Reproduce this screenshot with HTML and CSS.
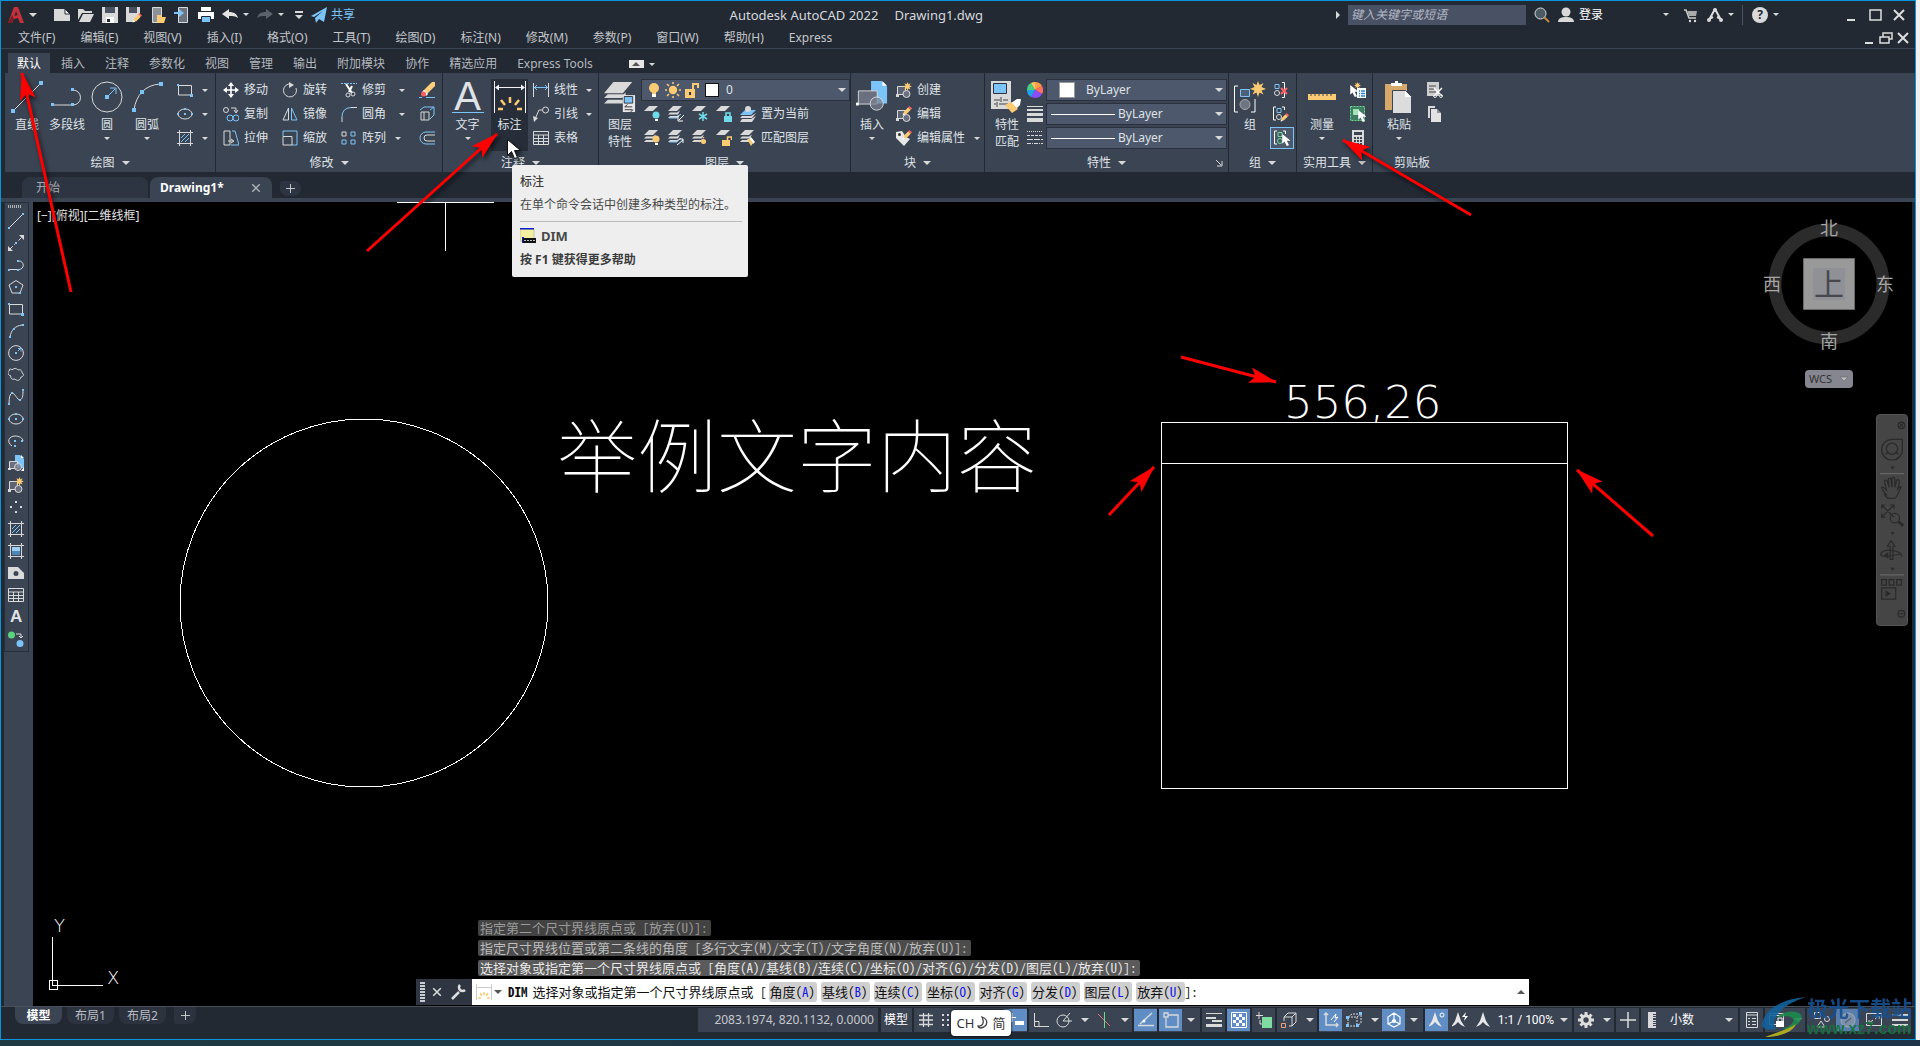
FILE: index.html
```html
<!DOCTYPE html>
<html lang="zh-CN">
<head>
<meta charset="utf-8">
<title>Autodesk AutoCAD 2022 Drawing1.dwg</title>
<link rel="stylesheet" href="styles.css">
</head>
<body>
<svg class="defs" aria-hidden="true">
  <defs>
    <symbol id="line" viewBox="0 0 32 32"><path class="w" d="M3 29 29 3"/><path class="bf" d="M0 28h4v4H0zM28 0h4v4h-4z"/></symbol>
    <symbol id="pline" viewBox="0 0 32 32"><path class="w" d="M2 24H22M22 9a7.500 7.500 0 0 1 0 15"/><path class="bf" d="M0 22h3v3H0zM20 22h3v3h-3zM20 7h3v3h-3z"/></symbol>
    <symbol id="circle" viewBox="0 0 32 32"><circle class="w" cx="16" cy="16" r="15"/><path class="b" d="M16 16 24 8M19 7h6v6"/><path class="bf" d="M14 14h4v4h-4z"/></symbol>
    <symbol id="arc" viewBox="0 0 32 32"><path class="w" d="M3 29C5 14 14 4 29 3"/><path class="bf" d="M1 27h4v4H1zM9 9h4v4H9zM28 1h4v4h-4z"/></symbol>
    <symbol id="line16" viewBox="0 0 16 16"><path class="w" d="M2 14 14 2"/><path class="bf" d="M0 14h2v2H0zM14 0h2v2h-2z"/></symbol>
    <symbol id="pline16" viewBox="0 0 16 16"><path class="w" d="M2 12.500h8M11 4a4 4 0 0 1 0 8.500"/><path class="bf" d="M0 12h2v2H0zM9 12h2v2H9zM9 3h2v2H9z"/></symbol>
    <symbol id="circle16" viewBox="0 0 16 16"><circle class="w" cx="8" cy="8" r="7.400"/><path class="b" d="M10 6l3-3M10 3.500h3v3"/><path class="bf" d="M7 7h2v2H7z"/></symbol>
    <symbol id="arc16" viewBox="0 0 16 16"><path class="w" d="M2 14C3 7 7 3 14 2"/><path class="bf" d="M1 13h2v2H1zM5 5h2v2H5zM14 1h2v2h-2z"/></symbol>
    <symbol id="rect" viewBox="0 0 16 16"><path class="w" d="M2 3.500H14.500V13H1.500V4"/><path class="bf" d="M0 2h2v2H0zM13 12h3v3h-3z"/></symbol>
    <symbol id="ellipse" viewBox="0 0 16 16"><ellipse class="w" cx="8" cy="8" rx="7" ry="5"/><path class="bf" d="M7 2h2v2H7zM0 7h2v2H0zM14 7h2v2h-2zM7 7h2v2H7z"/></symbol>
    <symbol id="hatch" viewBox="0 0 16 16"><path class="w" d="M0 2.500h16M0 13.500h16M2.500 0v16M13.500 0v16"/><path class="b" d="M4 8 8 4M4 12 12 4M8 12 12 8"/></symbol>
    <symbol id="grad" viewBox="0 0 16 16"><path fill="#4f86b8" d="M4 4h8v8H4z"/><path fill="#9ccdf5" d="M4 4h8v4H4z"/><path class="w" d="M0 2.500h16M0 13.500h16M2.500 0v16M13.500 0v16"/></symbol>
    <symbol id="move" viewBox="0 0 16 16"><path stroke="#fff" stroke-width="1.600" fill="none" d="M8 1v14M1 8h14"/><path fill="#fff" d="M8 0l3 4H5zM8 16l3-4H5zM0 8l4-3v6zM16 8l-4-3v6z"/></symbol>
    <symbol id="rotate" viewBox="0 0 16 16"><path class="w" d="M9 2a6.500 6.500 0 1 0 5 4"/><path class="wf" d="M7 0l5 3-5 3z"/></symbol>
    <symbol id="trim" viewBox="0 0 16 16"><path class="b" stroke-dasharray="2 1" d="M0 1.500h16"/><path stroke="#fff" stroke-width="2" fill="none" d="M5 2l6 9M11 4l-3 6"/><circle class="w" cx="7" cy="13" r="2"/><circle class="w" cx="12" cy="12" r="2"/></symbol>
    <symbol id="copyo" viewBox="0 0 16 16"><circle class="w" cx="3" cy="4" r="2.500"/><circle class="b" cx="7" cy="12" r="3"/><circle class="b" cx="13" cy="12" r="3"/><path class="w" d="M8 2h5v4M11 4l2 3 2-3"/></symbol>
    <symbol id="mirror" viewBox="0 0 16 16"><path class="w" d="M6.500 2v12H1z"/><path class="b" d="M9.500 2v12H15z"/></symbol>
    <symbol id="fillet" viewBox="0 0 16 16"><path class="b" d="M1 11Q1 2 10 1.500"/><path class="w" d="M1 11v5M10 1.500h6"/></symbol>
    <symbol id="stretch" viewBox="0 0 16 16"><path class="w" d="M1 1h6v14H1zM5 11h5M8 9l3 2-3 2"/><path class="b" d="M9 1h3l4 14H8"/></symbol>
    <symbol id="scale" viewBox="0 0 16 16"><path class="b" d="M1 6V1h14v14H10"/><path class="w" d="M1 6.500h9V15H1z"/></symbol>
    <symbol id="array" viewBox="0 0 16 16"><path class="w" d="M1 2h4v4H1z"/><path class="b" d="M10 2h4v4h-4zM1 10h4v4H1zM10 10h4v4h-4z"/></symbol>
    <symbol id="erase" viewBox="0 0 16 16"><path fill="#ffd07c" d="M4 9 13 0h3v4L8 12z"/><path fill="#fff" d="M5 8l4 4-2 2-4-4z"/><circle cx="4.500" cy="12" r="2.500" fill="#ff5f5f"/><path class="b" d="M0 15.500h3M7 15.500h9"/></symbol>
    <symbol id="explode" viewBox="0 0 16 16"><path class="b" d="M1 4 5 1h10v8l-4 4M11 4l4-3"/><path class="w" d="M2 6h8v8H2zM5 6v8"/></symbol>
    <symbol id="offset" viewBox="0 0 16 16"><path class="b" d="M16 2H7a6 6 0 0 0 0 12h9"/><path class="w" d="M16 5H8a3 3 0 0 0 0 6h8"/></symbol>
    <symbol id="dim" viewBox="0 0 32 32"><path stroke="#f2f2f2" fill="none" d="M.5 0v32M31.500 0v32M2 6.500h28"/><path fill="#f2f2f2" d="M1 6.500l4-3v6zM31 6.500l-4-3v6z"/><path stroke="#fbcb74" stroke-width="2.500" fill="none" d="M4 28h5M23 28h5M7 19l4 5M25 19l-4 5M16 16v6"/></symbol>
    <symbol id="linear" viewBox="0 0 16 16"><path class="w" d="M.5 1v14M15.500 1v14"/><path class="b" d="M1 5.500h14M4 3 1.500 5.500 4 8M12 3l2.500 2.500L12 8"/></symbol>
    <symbol id="leader" viewBox="0 0 16 16"><circle class="w" cx="12.500" cy="4" r="3"/><path class="w" d="M9 4H6L2 13"/><path class="wf" d="M0 10l5 2-4 4z"/></symbol>
    <symbol id="table" viewBox="0 0 16 16"><path class="w" d="M.5 1.500h15v13H.5zM.5 5h15M.5 8.500h15M.5 11.500h15M5.500 5v9.500M10.500 5v9.500"/></symbol>
    <symbol id="layers" viewBox="0 0 34 34"><path class="wf" d="M10 1h20l-10 12H0zM4 14h17l2-2v5l-5 1H0zM4 20h16v4H0z"/><path fill="#e8e8e8" d="M20 15h13v18H20z"/><path fill="#7cc4f8" stroke="#2c3440" d="M21.500 16.500h9v7h-9z"/><path stroke="#333" fill="none" d="M22 27.500h8M25 25l-3 2.500M22 30.500h8M28 33l3-2.500"/></symbol>
    <symbol id="lyr" viewBox="0 0 16 16"><path class="wf" d="M5 0h9l-5 5H0z"/></symbol>
    <symbol id="lyr3" viewBox="0 0 16 16"><path class="wf" d="M5 0h9l-5 5H0zM2 6.500h7l3-2-2 4H0zM2 10h7l3-2-3 4H0z"/></symbol>
    <symbol id="lOff" viewBox="0 0 16 16"><use href="#lyr"/><circle cx="12" cy="9" r="3.500" fill="#70dbe8"/><path fill="#fff" d="M11 13h3v2h-3z"/></symbol>
    <symbol id="lIso" viewBox="0 0 16 16"><use href="#lyr3"/><path class="b" d="M1 12h8l4-4"/><path stroke="#fff" fill="none" d="M16 9l-5 5M10 10v5h5"/></symbol>
    <symbol id="lFrz" viewBox="0 0 16 16"><use href="#lyr"/><path stroke="#70dbe8" stroke-width="1.500" fill="none" d="M11 6v9M7 8l8 5M15 8l-8 5"/></symbol>
    <symbol id="lLck" viewBox="0 0 16 16"><use href="#lyr"/><path fill="#70dbe8" d="M8 10h8v6H8z"/><path stroke="#70dbe8" fill="none" stroke-width="1.500" d="M10 10V7h4v3"/></symbol>
    <symbol id="lOn" viewBox="0 0 16 16"><use href="#lyr3"/><circle cx="12" cy="9" r="3.500" fill="#fbcb74"/><path fill="#fff" d="M11 13h3v2h-3z"/></symbol>
    <symbol id="lUniso" viewBox="0 0 16 16"><use href="#lyr3"/><path class="b" d="M1 12h8l4-4"/><path stroke="#fff" fill="none" d="M9 15l6-5M11 9h4v4"/></symbol>
    <symbol id="lThw" viewBox="0 0 16 16"><use href="#lyr3"/><circle cx="11.500" cy="11.500" r="2.500" fill="#fbcb74"/><path stroke="#fbcb74" stroke-dasharray="1 2" fill="none" stroke-width="1.500" d="M11.500 7v9M7 11.500h9"/></symbol>
    <symbol id="lUnl" viewBox="0 0 16 16"><use href="#lyr"/><path fill="#fbcb74" d="M6 10h8v6H6z"/><path stroke="#fbcb74" fill="none" stroke-width="1.500" d="M11.500 10V7h4v3"/></symbol>
    <symbol id="lCur" viewBox="0 0 16 16"><path class="bf" d="M5 4h11l-5 5H0z"/><path class="wf" d="M2 10h9l5-3-4 5H0zM2 13h9l5-3-4 6H0z"/><circle class="wf" cx="8" cy="3" r="3"/></symbol>
    <symbol id="lMat" viewBox="0 0 16 16"><use href="#lyr3"/><path fill="#fff" d="M9 9l2-2 4 5-2 2z"/><path fill="#fbcb74" d="M7 9l3 0 3 4-2 3z"/></symbol>
    <symbol id="bulb" viewBox="0 0 16 16"><circle cx="8" cy="6" r="5" fill="#fbcb74"/><path fill="#fbcb74" d="M6 9h4v3H6z"/><path fill="#fff" d="M6 12h4v3H6z"/></symbol>
    <symbol id="sun" viewBox="0 0 16 16"><circle cx="8" cy="8" r="4.200" fill="#fbcb74"/><path stroke="#fbcb74" stroke-width="1.500" d="M8 0v2M8 14v2M0 8h2M14 8h2M2 2l2 2M14 2l-2 2M2 14l2-2M14 14l-2-2"/></symbol>
    <symbol id="unlock" viewBox="0 0 16 16"><path fill="#fbcb74" d="M1 7h10v9H1z"/><path stroke="#fbcb74" fill="none" stroke-width="2" d="M9 7V2h5v4"/><path fill="#333" d="M5 10h2v3H5z"/></symbol>
    <symbol id="insert" viewBox="0 0 34 34"><path class="bf" d="M16 0h11l6 6v18H16z"/><path fill="#fff" d="M28 0l5 5h-5z"/><path fill="#6b7080" stroke="#d9d9d9" d="M2.500 10.500h20v14h-20z"/><circle fill="#7a8090" fill-opacity=".7" stroke="#d9d9d9" cx="22" cy="24" r="7"/><path fill="#fff" d="M0 23h3v3H0z"/></symbol>
    <symbol id="insert16" viewBox="0 0 16 16"><path class="bf" d="M7 0h5l4 4v9H7z"/><path fill="#fff" d="M13 0l3 3h-3zM16 12v4h-3z"/><path fill="#6b7080" stroke="#d9d9d9" d="M1.500 6.500h8v7h-8z"/><circle fill="#7a8090" fill-opacity=".8" stroke="#d9d9d9" cx="10" cy="12" r="3.500"/><path class="wf" d="M0 13h3v2H0z"/></symbol>
    <symbol id="blk" viewBox="0 0 16 16"><path fill="#5d6574" stroke="#d9d9d9" d="M1.500 4.500h8v8h-8z"/><circle fill="#6b7080" stroke="#d9d9d9" cx="10.500" cy="12" r="3.500"/><path class="wf" d="M0 12h3v3H0z"/></symbol>
    <symbol id="star" viewBox="0 0 16 16"><path fill="#fbcb74" d="M8 0l1.500 4 4-2-2 4 4.500 2-4.500 1.500 2 4-4-2L8 16l-1.500-4.500-4 2 2-4L0 8l4.500-2-2-4 4 2z"/></symbol>
    <symbol id="pen" viewBox="0 0 16 16"><path fill="#fbcb74" d="M2 14l1-5 7-7 4 4-7 7z"/><path fill="#ff5f5f" d="M10 2l2-2 4 4-2 2z"/><path fill="#fff" d="M1 15l1-4 3 3z"/></symbol>
    <symbol id="create" viewBox="0 0 16 16"><use href="#blk"/><use href="#star" x="7" y="0" width="9" height="9"/></symbol>
    <symbol id="bedit" viewBox="0 0 16 16"><use href="#blk"/><use href="#pen" x="6" y="0" width="10" height="10"/></symbol>
    <symbol id="attr" viewBox="0 0 16 16"><path fill="#e8e8e8" d="M0 2l6-1 4 6 4 2-6 7-8-8z"/><circle cx="3.500" cy="4.500" r="1.500" fill="#333"/><use href="#pen" x="6" y="0" width="10" height="10"/></symbol>
    <symbol id="match" viewBox="0 0 32 32"><path class="wf" d="M0 0h20v28H0z"/><path fill="#7cc4f8" stroke="#2c3440" d="M2.500 2.500h13v10h-13z"/><path stroke="#444" fill="none" d="M3 19h6M12 19h5M3 23h2M8 23h9M10 16v5M6 21v5"/><path fill="#fff" d="M20 22l6-4 4 0-1 6-4 4z"/><path fill="#fbcb74" d="M14 24l6-3 7 7-6 4z"/></symbol>
    <symbol id="wheel" viewBox="0 0 16 16"><path fill="#ff9b4a" d="M8 8V0a8 8 0 0 1 7 4z"/><path fill="#ff6f61" d="M8 8l7-4a8 8 0 0 1 0 8z"/><path fill="#8a4dff" d="M8 8l7 4a8 8 0 0 1-7 4l-4-1z"/><path fill="#23a3e8" d="M8 8l-4 7a8 8 0 0 1-4-7z"/><path fill="#45cf82" d="M8 8H0a8 8 0 0 1 4-7z"/><path fill="#fbcb5a" d="M8 8 4 1a8 8 0 0 1 4-1z"/></symbol>
    <symbol id="lw" viewBox="0 0 16 16"><path class="wf" d="M0 0h16v1H0zM0 3h16v2H0zM0 7h16v3H0zM0 12h16v4H0z"/></symbol>
    <symbol id="lt" viewBox="0 0 16 16"><path class="w" stroke-dasharray="1 1" d="M0 1.500h16"/><path class="w" stroke-dasharray="3 1" d="M0 5.500h16"/><path class="w" stroke-dasharray="6 1" d="M0 9.500h16"/><path class="w" stroke-dasharray="4 1 1 1" d="M0 13.500h16"/></symbol>
    <symbol id="group" viewBox="0 0 32 32"><path stroke="#fff" fill="none" d="M4 5H.5v26H4M17 31h4V18"/><path fill="#4d6076" stroke="#7cc4f8" d="M6.500 8.500h9v7h-9z"/><circle fill="#6f7581" stroke="#aaa" cx="11" cy="23.500" r="5"/><use href="#star" x="16" y="0" width="16" height="16"/></symbol>
    <symbol id="grp" viewBox="0 0 16 16"><path stroke="#fff" fill="none" d="M3 1H.5v13H3M9 1h2.500v3"/><path class="b" d="M4 2.500h4v4H4z"/><circle class="w" cx="6" cy="11" r="2.500"/></symbol>
    <symbol id="ungrp" viewBox="0 0 16 16"><path class="b" d="M2 2.500h4v4H2z"/><circle class="w" cx="4" cy="11" r="2.500"/><path stroke="#fff" fill="none" d="M9 .5h2.500v15H9"/><path stroke="#ff6464" stroke-width="2" d="M8 6l6 6M14 6l-6 6"/></symbol>
    <symbol id="gedit" viewBox="0 0 16 16"><use href="#grp"/><use href="#pen" x="7" y="7" width="9" height="9"/></symbol>
    <symbol id="cursor" viewBox="0 0 16 16"><path fill="#fff" d="M3 0v13l3-3 3 6 3-1-3-6h5z"/></symbol>
    <symbol id="gsel" viewBox="0 0 16 16"><path stroke="#fff" fill="none" d="M3 1H.5v13H3M9 1h2.500v3"/><path stroke="#6bdc8c" fill="none" d="M4 2.500h4v4H4z"/><circle stroke="#6bdc8c" fill="none" cx="6" cy="11" r="2.500"/><use href="#cursor" x="6" y="4" width="12" height="12"/></symbol>
    <symbol id="ruler" viewBox="0 0 32 32"><path fill="#fbcb74" d="M2 13h28v6H2z"/><path stroke="#3b4453" d="M5 12v3M9 12v3M13 12v3M17 12v3M21 12v3M25 12v3"/></symbol>
    <symbol id="qsel" viewBox="0 0 16 16"><use href="#star" x="4" y="0" width="7" height="7"/><use href="#cursor" x="-2" y="3" width="12" height="12"/><path fill="#fff" d="M7 6h9v10H7z"/><path stroke="#2484d8" stroke-width="1.400" d="M9 9h1M11 9h4M9 11.500h1M11 11.500h4M9 14h1M11 14h4"/></symbol>
    <symbol id="ssel" viewBox="0 0 16 16"><path stroke="#6bdc8c" fill="#3f7c63" stroke-dasharray="2 1" d="M.5.5h14v14H.5z"/><path fill="#a0e4b6" d="M3 3h6v6H3z"/><use href="#cursor" x="6" y="4" width="12" height="12"/></symbol>
    <symbol id="calc" viewBox="0 0 16 16"><path class="wf" d="M2 0h12v16H2z"/><path fill="#3b4453" d="M4 2h8v3H4zM4 7h2v2H4zM7 7h2v2H7zM10 7h2v2h-2zM4 10h2v2H4zM7 10h2v2H7zM10 10h2v2h-2zM4 13h2v2H4zM7 13h2v2H7zM10 13h2v2h-2z"/></symbol>
    <symbol id="paste" viewBox="0 0 32 32"><path fill="#d7a96b" d="M2 3h22v26H2z"/><path fill="#fff" d="M8 2h4V0h3v2h4v3H8z"/><path fill="#dcdcdc" stroke="#3b4453" d="M9.500 9.500h13l6 6v17h-19z"/><path fill="#fff" d="M22 10v6h6z"/></symbol>
    <symbol id="cut" viewBox="0 0 16 16"><path fill="#cfcfcf" d="M0 0h12v14H0z"/><path stroke="#444" d="M2 4h7M2 7h5M2 10h7"/><path stroke="#fff" stroke-width="1.500" d="M7 6l8 8M15 6l-8 8"/><circle class="w" cx="8" cy="14" r="1.500"/><circle class="w" cx="14" cy="14" r="1.500"/></symbol>
    <symbol id="copy" viewBox="0 0 16 16"><path class="wf" d="M1 0h7v2H3v10H1z"/><path fill="#e2e2e2" d="M4 3h6l4 4v9H4z"/><path fill="#3b4453" d="M10 3v4h4z" opacity=".5"/></symbol>
    <symbol id="xline" viewBox="0 0 16 16"><path class="w" stroke-dasharray="4 2" d="M2 14 14 2"/><path class="wf" d="M0 16v-5l5 5zM16 0h-5l5 5z"/><path class="bf" d="M7 7h2v2H7z"/></symbol>
    <symbol id="poly" viewBox="0 0 16 16"><path class="w" d="M8 1.500 15 6l-3 8H4L1 6z"/><path class="bf" d="M7 7h2v2H7zM11 13h2v2h-2z"/></symbol>
    <symbol id="cloud" viewBox="0 0 16 16"><path class="w" d="M4 3c3-3 5-1 6 0 3-1 4 1 4 3 3 1 1 4-1 4-1 4-4 4-6 2-3 1-5-1-4-3-4-1-4-5-1-6-1-1 0-2 2 0z"/></symbol>
    <symbol id="spline" viewBox="0 0 16 16"><path class="w" d="M1 15Q1 5 4 4c3 0 5 7 8 7 3-1 3-6 3-10"/><path class="bf" d="M0 14h2v2H0zM3 3h2v2H3zM11 10h2v2h-2zM14 0h2v2h-2z"/></symbol>
    <symbol id="earc" viewBox="0 0 16 16"><path class="w" d="M4 13C-2 9 1 3 7 3c4 0 8 2 8 5"/><path class="bf" d="M6 7h2v2H6zM13 7h2v2h-2zM6 12h2v2H6z"/></symbol>
    <symbol id="points" viewBox="0 0 16 16"><path class="wf" d="M7 2h2v2H7zM2 7h2v2H2zM12 7h2v2h-2zM7 12h2v2H7z"/></symbol>
    <symbol id="region" viewBox="0 0 16 16"><path fill="#d9d9d9" fill-rule="evenodd" d="M0 2h10l6 6v6H0zM8 6a2.500 2.500 0 1 0 0 5 2.500 2.500 0 0 0 0-5z"/></symbol>
    <symbol id="dots2" viewBox="0 0 16 16"><circle cx="3.500" cy="4" r="3.500" fill="#58d47e"/><circle cx="12" cy="12.500" r="3.500" fill="#7cc4f8"/><path class="w" d="M8 3h5v4M11 5l2 2 2-2"/></symbol>
    <symbol id="fNew" viewBox="0 0 16 16"><path class="wf" d="M0 2h11l5 5v7H0z"/><path fill="#fff" stroke="#222933" d="M11 2v5h5z"/></symbol>
    <symbol id="fOpen" viewBox="0 0 16 16"><path class="wf" d="M0 2h5l2 2h7v2H4l-4 7z"/><path class="wf" d="M5 7h11l-4 8H1z"/></symbol>
    <symbol id="fSave" viewBox="0 0 16 16"><path class="wf" d="M0 0h16v16H0z"/><path fill="#4a5160" d="M3 0h10v6H3z"/><path fill="#fff" d="M4 10h8v6H4z"/><path fill="#222933" d="M5 12h3v3H5z"/></symbol>
    <symbol id="fSaveAs" viewBox="0 0 16 16"><path class="wf" d="M0 0h14v9l-6 6H0z"/><path fill="#4a5160" d="M3 0h8v6H3z"/><use href="#pen" x="6" y="6" width="10" height="10"/></symbol>
    <symbol id="fMob" viewBox="0 0 16 16"><path fill="#8c919a" stroke="#d9d9d9" d="M2.500.5h9v15h-9z"/><path fill="#fbcb74" d="M7 8h4l1 2h4l-2 6H7z"/></symbol>
    <symbol id="fMobS" viewBox="0 0 16 16"><path fill="#6e747f" stroke="#d9d9d9" d="M4.500.5h9v15h-9z"/><path fill="#7cc4f8" d="M0 5h5V2l5 4-5 4V7H0z"/></symbol>
    <symbol id="print" viewBox="0 0 16 16"><path fill="#fff" d="M3 0h10v4H3zM0 5h16v7H0z"/><path fill="#7cc4f8" stroke="#222933" d="M3.500 9.500h9v6h-9z"/></symbol>
    <symbol id="undo" viewBox="0 0 16 16"><path fill="#e4e4e4" d="M0 7l7-5v3c5 0 8 2 9 6-3-2-5-2-9-2v3z"/></symbol>
    <symbol id="redo" viewBox="0 0 16 16"><path fill="#5c626c" d="M16 7 9 2v3C4 5 1 7 0 11c3-2 5-2 9-2v3z"/></symbol>
    <symbol id="plane" viewBox="0 0 16 16"><path fill="#7cc4f8" d="M0 9 16 0l-3 15-5-3-3 4-1-5 8-7-9 6z"/></symbol>
    <symbol id="logoA" viewBox="0 0 16 16"><path fill="#c5303a" d="M6 0h4l6 16h-4l-2-5-4 1-2 4H0zM8 4 6.500 9 9.500 8z"/><path fill="#7d1c25" d="M0 16 4 8l2 4-2 4z"/></symbol>
    <symbol id="search" viewBox="0 0 16 16"><circle fill="#4b5a63" stroke="#ddd" cx="6.500" cy="6.500" r="5.500"/><path stroke="#c48a4b" stroke-width="2" d="M10.500 10.500 15 15"/></symbol>
    <symbol id="user" viewBox="0 0 16 16"><circle class="wf" cx="8" cy="5" r="4.500"/><path class="wf" d="M0 15c0-4 4-5 8-5s8 1 8 5z"/></symbol>
    <symbol id="cart" viewBox="0 0 16 16"><path stroke="#ccc" fill="none" stroke-width="1.500" d="M1 3h2l3 8h7"/><path fill="#aaa" d="M4 4h10l-1 5H6z"/><circle class="wf" cx="7" cy="14" r="1.200"/><circle class="wf" cx="12" cy="14" r="1.200"/></symbol>
    <symbol id="adsk" viewBox="0 0 16 16"><path stroke="#ddd" stroke-width="2" fill="none" d="M8 2 2 13M8 2l6 11M2 12l4-2M14 12l-4-2"/><circle class="wf" cx="8" cy="3" r="2"/><circle class="wf" cx="2" cy="13" r="2"/><circle class="wf" cx="14" cy="13" r="2"/></symbol>
    <symbol id="min" viewBox="0 0 16 16"><path fill="#ddd" d="M4 12h8v2H4z"/></symbol>
    <symbol id="max" viewBox="0 0 16 16"><path stroke="#ddd" stroke-width="1.500" fill="none" d="M3 3h11v10H3z"/></symbol>
    <symbol id="restore" viewBox="0 0 16 16"><path stroke="#ddd" stroke-width="1.500" fill="none" d="M2 7h9v6H2zM5 7V3h9v6h-3"/></symbol>
    <symbol id="close" viewBox="0 0 16 16"><path stroke="#ddd" stroke-width="2" d="M3 3l10 10M13 3 3 13"/></symbol>
    <symbol id="wrench" viewBox="0 0 16 16"><path stroke="#ddd" stroke-width="2.500" fill="none" d="M2 15 9 8"/><path stroke="#ddd" stroke-width="2.500" fill="none" d="M10 1a3.500 3.500 0 1 0 5 5"/></symbol>
    <symbol id="sGrid" viewBox="0 0 16 16"><path class="w" stroke-width="1.300" d="M5.500 1v14M10.500 1v14M1 3.500h14M1 8h14M1 12.500h14"/></symbol>
    <symbol id="sSnap" viewBox="0 0 16 16"><path class="wf" d="M1 2h2v2H1zM6 2h2v2H6zM11 2h2v2h-2zM1 7h2v2H1zM6 7h2v2H6zM11 7h2v2h-2zM1 12h2v2H1zM6 12h2v2H6z"/></symbol>
    <symbol id="sDyn" viewBox="0 0 16 16"><path fill="#fff" d="M7 9h9v4H7z"/><path stroke="#fff" d="M4 1v9M0 5.500h8"/></symbol>
    <symbol id="sOrtho" viewBox="0 0 16 16"><path class="w" d="M1.500 1v13.500H16M1 9.500h5v5"/></symbol>
    <symbol id="sPolar" viewBox="0 0 16 16"><circle class="w" cx="7" cy="9" r="6"/><path class="w" d="M7 9h9M7 9l7-8"/></symbol>
    <symbol id="sIso" viewBox="0 0 16 16"><path stroke="#e57373" d="M2 2l12 12"/><path stroke="#6bdc8c" d="M8.500 0v16"/></symbol>
    <symbol id="sTrack" viewBox="0 0 16 16"><path class="w" stroke-width="1.500" d="M0 13.500h16M2 12 14 1"/><circle cx="6" cy="9" r="1.500" fill="#fff"/></symbol>
    <symbol id="sOsnap" viewBox="0 0 16 16"><path class="w" stroke-width="1.300" d="M5 3h10v12H3V6M1 1h4v4H1z"/></symbol>
    <symbol id="sLw" viewBox="0 0 16 16"><path class="wf" d="M0 1h16v1H0zM0 5h10v2H0zM6 8h10v2H6zM0 12h16v3H0z"/></symbol>
    <symbol id="sTrans" viewBox="0 0 16 16"><path stroke="#fff" fill="none" d="M.5.500h15v15H.5z"/><path fill="#fff" d="M2 2h3v3H2zM8 2h3v3H8zM5 5h3v3H5zM11 5h3v3h-3zM2 8h3v3H2zM8 8h3v3H8zM5 11h3v3H5zM11 11h3v3h-3z"/></symbol>
    <symbol id="sCyc" viewBox="0 0 16 16"><path fill="#7fdca0" d="M6 5h10v11H6z"/><path stroke="#d9d9d9" fill="none" d="M3 0v7M0 3.500h7M4 8v4h2"/></symbol>
    <symbol id="s3d" viewBox="0 0 16 16"><path class="w" d="M3 9V5l4-4h8v9l-4 4H8M3 5h8l4-4M11 5v9"/><path stroke="#f0a070" fill="none" d="M.5 11.500h4v4h-4z"/></symbol>
    <symbol id="sUcs" viewBox="0 0 16 16"><path class="w" stroke-width="1.500" d="M3 1v12h12M1 3l2-2 2 2M13 11l2 2-2 2"/><path stroke="#fff" fill="none" d="M8 8l5-6-1 4 3-1-4 5"/></symbol>
    <symbol id="sFilt" viewBox="0 0 16 16"><path class="w" stroke-dasharray="2 1" d="M2 5l4-3h9v9l-4 3H2zM11 5v9M2 5h9l4-3"/><path class="bf" d="M0 4h3v3H0zM0 12h3v3H0zM10 12h3v3h-3zM13 0h3v3h-3z"/></symbol>
    <symbol id="sGiz" viewBox="0 0 16 16"><path stroke="#fff" fill="none" stroke-width="1.200" d="M8 1l6 4v7l-6 3-6-3V5zM8 1v8M8 9l-6 3M8 9l6 3"/><circle cx="8" cy="9" r="2" fill="#fff"/></symbol>
    <symbol id="sAnn" viewBox="0 0 16 16"><path fill="#e8e8e8" d="M8 0l3 9 4 6-4-2-3-3-3 3-4 2 4-6z"/></symbol>
    <symbol id="sAnn1" viewBox="0 0 16 16"><use href="#sAnn" x="-2"/><circle cx="13" cy="3" r="2" stroke="#fff" fill="none"/></symbol>
    <symbol id="sAnn2" viewBox="0 0 16 16"><use href="#sAnn" x="-2"/><path fill="#fff" d="M14 0l-4 5h3l-1 4 4-5h-3z"/></symbol>
    <symbol id="gear" viewBox="0 0 16 16"><circle cx="8" cy="8" r="4.200" stroke="#ddd" stroke-width="3" fill="none"/><path stroke="#ddd" stroke-width="3" d="M8 0v3M8 13v3M0 8h3M13 8h3M2.500 2.500l2 2M13.500 2.500l-2 2M2.500 13.500l2-2M13.500 13.500l-2-2"/></symbol>
    <symbol id="plus" viewBox="0 0 16 16"><path stroke="#ddd" stroke-width="1.500" d="M8 0v16M0 8h16"/></symbol>
    <symbol id="sRul" viewBox="0 0 16 16"><path class="wf" d="M4 0h8v2H9v1h3v1H9v1h3v1H9v2h3v1H9v1h3v1H9v1h3v1H9v1h3v2H4z"/></symbol>
    <symbol id="sList" viewBox="0 0 16 16"><path class="w" d="M2.500.5h11v15h-11zM2 3h12M4 6.500h2M8 6.500h4M4 9.500h2M8 9.500h4M4 12.500h2M8 12.500h4"/></symbol>
    <symbol id="sLock" viewBox="0 0 16 16"><path class="w" d="M.5 1.500h14v11H.5zM1 3.500h13"/><path fill="#fff" d="M7 9h8v6H7z"/><path stroke="#fff" fill="none" d="M9 9V6h4v3"/></symbol>
    <symbol id="sIsoO" viewBox="0 0 16 16"><path class="w" d="M.5.5h6v6h-6zM7 9l4 6H3z"/><circle class="w" cx="13" cy="7" r="2.500"/></symbol>
    <symbol id="sHw" viewBox="0 0 16 16"><circle cx="8" cy="8" r="7" fill="#8fa3bd" stroke="#b9c4d4"/><path stroke="#5b6f8b" stroke-width="1.500" d="M5 11l6-5"/></symbol>
    <symbol id="sFull" viewBox="0 0 16 16"><path class="w" d="M.5 1.500h15v12H.5zM9 4h4v3M13 4 9 7M7 11H3V8M3 11l4-3"/></symbol>
    <symbol id="sMenu" viewBox="0 0 16 16"><path class="wf" d="M0 2h16v2H0zM0 7h16v2H0zM0 12h16v2H0z"/></symbol>
    <marker id="head" viewBox="0 0 28 16" refX="27" refY="8" markerWidth="28" markerHeight="16" markerUnits="userSpaceOnUse" orient="auto"><path fill="#f00" d="M28 8 0 0l6 8-6 8z"/></marker>
  </defs>
</svg>

<div class="desktop">
<div class="window">
  <header class="titlebar">
    <div class="quick">
      <button class="ib" aria-label="菜单"><svg class="i"><use href="#logoA"/></svg><i class="caret"></i></button>
      <div class="qa">
        <button class="ib"><svg class="i"><use href="#fNew"/></svg></button>
        <button class="ib"><svg class="i"><use href="#fOpen"/></svg></button>
        <button class="ib"><svg class="i"><use href="#fSave"/></svg></button>
        <button class="ib"><svg class="i"><use href="#fSaveAs"/></svg></button>
        <button class="ib"><svg class="i"><use href="#fMob"/></svg></button>
        <button class="ib"><svg class="i"><use href="#fMobS"/></svg></button>
        <button class="ib"><svg class="i"><use href="#print"/></svg></button>
        <button class="ib"><svg class="i"><use href="#undo"/></svg><i class="caret s"></i></button>
        <button class="ib"><svg class="i"><use href="#redo"/></svg><i class="caret s"></i></button>
        <button class="ib customise" aria-label="自定义"><i class="caret"></i></button>
      </div>
      <button class="ib share"><svg class="i"><use href="#plane"/></svg>共享</button>
    </div>
    <h1 class="title"><span>Autodesk AutoCAD 2022</span><span>Drawing1.dwg</span></h1>
    <div class="account">
      <i class="caret right"></i>
      <input class="search" type="text" placeholder="键入关键字或短语" aria-label="搜索">
      <button class="ib"><svg class="i"><use href="#search"/></svg></button>
      <button class="ib login"><svg class="i"><use href="#user"/></svg>登录<i class="caret s"></i></button>
      <button class="ib"><svg class="i"><use href="#cart"/></svg></button>
      <button class="ib"><svg class="i"><use href="#adsk"/></svg><i class="caret s"></i></button>
      <button class="ib help"><b>?</b><i class="caret s"></i></button>
    </div>
    <div class="winctl">
      <button class="ib"><svg class="i"><use href="#min"/></svg></button>
      <button class="ib"><svg class="i"><use href="#max"/></svg></button>
      <button class="ib"><svg class="i"><use href="#close"/></svg></button>
    </div>
  </header>

  <nav class="menubar">
    <button>文件(F)</button><button>编辑(E)</button><button>视图(V)</button><button>插入(I)</button><button>格式(O)</button><button>工具(T)</button><button>绘图(D)</button><button>标注(N)</button><button>修改(M)</button><button>参数(P)</button><button>窗口(W)</button><button>帮助(H)</button><button>Express</button>
    <div class="docctl">
      <button class="ib"><svg class="i"><use href="#min"/></svg></button>
      <button class="ib"><svg class="i"><use href="#restore"/></svg></button>
      <button class="ib"><svg class="i"><use href="#close"/></svg></button>
    </div>
  </nav>

  <nav class="tabs">
    <button class="on">默认</button><button>插入</button><button>注释</button><button>参数化</button><button>视图</button><button>管理</button><button>输出</button><button>附加模块</button><button>协作</button><button>精选应用</button><button>Express Tools</button>
    <button class="mini" aria-label="最小化"><span><i class="caret up"></i></span><i class="caret s"></i></button>
  </nav>

  <div class="ribbon">
    <section class="panel p-draw">
      <div class="tools">
        <button class="big"><svg class="l"><use href="#line"/></svg>直线</button>
        <button class="big"><svg class="l"><use href="#pline"/></svg>多段线</button>
        <button class="big"><svg class="l"><use href="#circle"/></svg>圆<i class="caret s"></i></button>
        <button class="big"><svg class="l"><use href="#arc"/></svg>圆弧<i class="caret s"></i></button>
        <div class="col">
          <button class="sm"><svg class="i"><use href="#rect"/></svg><i class="caret s"></i></button>
          <button class="sm"><svg class="i"><use href="#ellipse"/></svg><i class="caret s"></i></button>
          <button class="sm"><svg class="i"><use href="#hatch"/></svg><i class="caret s"></i></button>
        </div>
      </div>
      <h2>绘图<i class="caret"></i></h2>
    </section>
    <section class="panel p-mod">
      <div class="tools">
        <div class="col">
          <button class="sm"><svg class="i"><use href="#move"/></svg>移动</button>
          <button class="sm"><svg class="i"><use href="#copyo"/></svg>复制</button>
          <button class="sm"><svg class="i"><use href="#stretch"/></svg>拉伸</button>
        </div>
        <div class="col">
          <button class="sm"><svg class="i"><use href="#rotate"/></svg>旋转</button>
          <button class="sm"><svg class="i"><use href="#mirror"/></svg>镜像</button>
          <button class="sm"><svg class="i"><use href="#scale"/></svg>缩放</button>
        </div>
        <div class="col">
          <button class="sm wide"><svg class="i"><use href="#trim"/></svg>修剪<i class="caret s"></i></button>
          <button class="sm wide"><svg class="i"><use href="#fillet"/></svg>圆角<i class="caret s"></i></button>
          <button class="sm"><svg class="i"><use href="#array"/></svg>阵列<i class="caret s"></i></button>
        </div>
        <div class="col">
          <button class="sm"><svg class="i"><use href="#erase"/></svg></button>
          <button class="sm"><svg class="i"><use href="#explode"/></svg></button>
          <button class="sm"><svg class="i"><use href="#offset"/></svg></button>
        </div>
      </div>
      <h2>修改<i class="caret"></i></h2>
    </section>
    <section class="panel p-ann">
      <div class="tools">
        <button class="big"><span class="glyphA">A</span>文字<i class="caret s"></i></button>
        <button class="big hot"><svg class="l"><use href="#dim"/></svg>标注</button>
        <div class="col">
          <button class="sm wide"><svg class="i"><use href="#linear"/></svg>线性<i class="caret s"></i></button>
          <button class="sm wide"><svg class="i"><use href="#leader"/></svg>引线<i class="caret s"></i></button>
          <button class="sm"><svg class="i"><use href="#table"/></svg>表格</button>
        </div>
      </div>
      <h2>注释<i class="caret"></i></h2>
    </section>
    <section class="panel p-lay">
      <div class="tools">
        <button class="big"><svg class="l"><use href="#layers"/></svg>图层<br>特性</button>
        <div class="col">
          <button class="combo layer"><svg class="i"><use href="#bulb"/></svg><svg class="i"><use href="#sun"/></svg><svg class="i"><use href="#unlock"/></svg><span class="sw"></span>0<i class="caret"></i></button>
          <div class="icons">
            <button class="sm"><svg class="i"><use href="#lOff"/></svg></button><button class="sm"><svg class="i"><use href="#lIso"/></svg></button><button class="sm"><svg class="i"><use href="#lFrz"/></svg></button><button class="sm"><svg class="i"><use href="#lLck"/></svg></button><button class="sm"><svg class="i"><use href="#lCur"/></svg>置为当前</button>
          </div>
          <div class="icons">
            <button class="sm"><svg class="i"><use href="#lOn"/></svg></button><button class="sm"><svg class="i"><use href="#lUniso"/></svg></button><button class="sm"><svg class="i"><use href="#lThw"/></svg></button><button class="sm"><svg class="i"><use href="#lUnl"/></svg></button><button class="sm"><svg class="i"><use href="#lMat"/></svg>匹配图层</button>
          </div>
        </div>
      </div>
      <h2>图层<i class="caret"></i></h2>
    </section>
    <section class="panel p-blk">
      <div class="tools">
        <button class="big"><svg class="l"><use href="#insert"/></svg>插入<i class="caret s"></i></button>
        <div class="col">
          <button class="sm"><svg class="i"><use href="#create"/></svg>创建</button>
          <button class="sm"><svg class="i"><use href="#bedit"/></svg>编辑</button>
          <button class="sm"><svg class="i"><use href="#attr"/></svg>编辑属性<i class="caret s"></i></button>
        </div>
      </div>
      <h2>块<i class="caret"></i></h2>
    </section>
    <section class="panel p-prop">
      <div class="tools">
        <button class="big"><svg class="l"><use href="#match"/></svg>特性<br>匹配</button>
        <div class="col">
          <button class="sm"><svg class="i"><use href="#wheel"/></svg></button>
          <button class="sm"><svg class="i"><use href="#lw"/></svg></button>
          <button class="sm"><svg class="i"><use href="#lt"/></svg></button>
        </div>
        <div class="col grow">
          <button class="combo color"><span class="sw"></span>ByLayer<i class="caret"></i></button>
          <button class="combo"><span class="rule"></span>ByLayer<i class="caret"></i></button>
          <button class="combo"><span class="rule"></span>ByLayer<i class="caret"></i></button>
        </div>
      </div>
      <h2>特性<i class="caret"></i><svg class="launch" viewBox="0 0 8 8"><path class="w" d="M1 1l5 5M7 2v5H2"/></svg></h2>
    </section>
    <section class="panel p-grp">
      <div class="tools">
        <button class="big"><svg class="l"><use href="#group"/></svg>组</button>
        <div class="col">
          <button class="sm"><svg class="i"><use href="#ungrp"/></svg></button>
          <button class="sm"><svg class="i"><use href="#gedit"/></svg></button>
          <button class="sm sel"><svg class="i"><use href="#gsel"/></svg></button>
        </div>
      </div>
      <h2>组<i class="caret"></i></h2>
    </section>
    <section class="panel p-util">
      <div class="tools">
        <button class="big"><svg class="l"><use href="#ruler"/></svg>测量<i class="caret s"></i></button>
        <div class="col">
          <button class="sm"><svg class="i"><use href="#qsel"/></svg></button>
          <button class="sm"><svg class="i"><use href="#ssel"/></svg></button>
          <button class="sm"><svg class="i"><use href="#calc"/></svg></button>
        </div>
      </div>
      <h2>实用工具<i class="caret"></i></h2>
    </section>
    <section class="panel p-clip">
      <div class="tools">
        <button class="big"><svg class="l"><use href="#paste"/></svg>粘贴<i class="caret s"></i></button>
        <div class="col">
          <button class="sm"><svg class="i"><use href="#cut"/></svg></button>
          <button class="sm"><svg class="i"><use href="#copy"/></svg></button>
        </div>
      </div>
      <h2>剪贴板</h2>
    </section>
  </div>

  <nav class="filetabs">
    <button class="ft start">开始</button>
    <button class="ft cur">Drawing1*<svg class="i"><use href="#close"/></svg></button>
    <button class="ft add"><svg class="p"><use href="#plus"/></svg></button>
  </nav>

  <main class="work">
    <aside class="side">
      <div class="toolbox">
        <span class="grip"></span>
        <button><svg class="i"><use href="#line16"/></svg></button>
        <button><svg class="i"><use href="#xline"/></svg></button>
        <button><svg class="i"><use href="#pline16"/></svg></button>
        <button><svg class="i"><use href="#poly"/></svg></button>
        <button><svg class="i"><use href="#rect"/></svg></button>
        <button><svg class="i"><use href="#arc16"/></svg></button>
        <button><svg class="i"><use href="#circle16"/></svg></button>
        <button><svg class="i"><use href="#cloud"/></svg></button>
        <button><svg class="i"><use href="#spline"/></svg></button>
        <button><svg class="i"><use href="#ellipse"/></svg></button>
        <button><svg class="i"><use href="#earc"/></svg></button>
        <button><svg class="i"><use href="#insert16"/></svg></button>
        <button><svg class="i"><use href="#create"/></svg></button>
        <button><svg class="i"><use href="#points"/></svg></button>
        <button><svg class="i"><use href="#hatch"/></svg></button>
        <button><svg class="i"><use href="#grad"/></svg></button>
        <button><svg class="i"><use href="#region"/></svg></button>
        <button><svg class="i"><use href="#table"/></svg></button>
        <button class="txt">A</button>
        <button><svg class="i"><use href="#dots2"/></svg></button>
      </div>
    </aside>
    <div class="canvas">
      <div class="viewlabel">[−][俯视][二维线框]</div>
      <svg class="drawing">
        <g fill="none" stroke="#fff" shape-rendering="crispEdges">
          <path d="M364 .5h97M412.500 0v49"/>
          <circle cx="331" cy="401" r="184"/>
          <path d="M1128.500 220.500h406v366h-406zM1128.500 261.500h406"/>
        </g>
        <text class="cad big" x="524" y="284">举例文字内容</text>
        <text class="cad num" x="1251" y="216">556,26</text>
      </svg>
      <svg class="ucs" viewBox="0 0 80 80">
        <path fill="none" stroke="#fff" shape-rendering="crispEdges" d="M.5 65.500h8v9h-8zM3.500 70.500v-49M3.500 70.500h50"/>
        <text class="cad" x="5" y="17">Y</text><text class="cad" x="58" y="69">X</text>
      </svg>
      <div class="cube">
        <svg viewBox="0 -8 136 152"><circle cx="68" cy="68" r="54" fill="none" stroke="#2b2b2b" stroke-width="13"/><path fill="#999" stroke="#6a6a6a" d="M42.500 42.500h51v51h-51z"/><path fill="#8f9197" d="M52 52h32v32H52z"/>
        <text x="68" y="79" class="top">上</text><text x="68" y="19">北</text><text x="68" y="132">南</text><text x="11" y="75">西</text><text x="124" y="75">东</text></svg>
        <button class="wcs">WCS<svg viewBox="0 0 10 6"><path fill="#bbb" stroke="#666" stroke-width=".6" d="M1 1h8L5 5z"/></svg></button>
      </div>
      <div class="navbar">
        <svg viewBox="0 0 32 212"><g fill="none" stroke="#2a2a2a" stroke-width="1.300">
          <circle cx="26" cy="5" r="3.500"/><path d="M24 3l4 4M28 3l-4 4"/>
          <path d="M16 20h11v11a11 11 0 1 1-11-11z"/><circle cx="16" cy="30" r="6"/><path d="M9 36l3-3M20 33l3 3"/>
          <path stroke="#666" d="M3 56.500h26M3 164.500h26"/>
          <path d="M10 79C6 74 4 72 5 71c2-1 4 2 5 3L8 65c0-2 2-2 3 0l2 6-1-8c0-2 3-2 3 0l1 8V62c0-2 3-2 3 0v9l2-7c0-2 3-1 3 1l-2 8 3-3c1 0 1 1 0 2-2 5-4 11-7 11h-5c-2 0-3-1-5-4z"/>
          <path d="M5 90l13 13M18 90 5 103M5 94v-4h4M14 90h4v4M5 99v4h4"/><circle cx="19" cy="104" r="5"/><path stroke-width="3" d="M23 108l5 4"/>
          <path d="M14 148v-14h-3l4-6 4 6h-2v14zM26 145c2-6-18-10-22-3-1 3 6 4 22 0"/>
          <path d="M5 169.500h5v6H5zM13 169.500h5v6h-5zM21 169.500h5v6h-5zM5 178.500h15v12H5z"/>
          <circle cx="26" cy="206" r="3.500"/><path d="M24 206h4"/></g>
          <path fill="#2a2a2a" d="M14 49h5l-2.500 3zM14 119h5l-2.500 3zM14 157h5l-2.500 3zM9 181l6 3.500-6 3.500zM7 144l5-4v7z"/></svg>
      </div>
      <div class="cmd">
        <p class="h1">指定第二个尺寸界线原点或 [放弃(U)]:</p>
        <p class="h2">指定尺寸界线位置或第二条线的角度 [多行文字(M)/文字(T)/文字角度(N)/放弃(U)]:</p>
        <p class="h3">选择对象或指定第一个尺寸界线原点或 [角度(A)/基线(B)/连续(C)/坐标(O)/对齐(G)/分发(D)/图层(L)/放弃(U)]:</p>
        <div class="cmdbar">
          <div class="cmdhandle"><span class="grip v"></span><button class="ib"><svg class="i"><use href="#close"/></svg></button><button class="ib"><svg class="i"><use href="#wrench"/></svg></button></div>
          <div class="cmdline">
            <svg class="i dimi" viewBox="0 0 16 16"><path fill="none" stroke="#ccc" d="M.5 0v16M15.500 0v16M1 3.500h14"/><path fill="none" stroke="#fbcb74" stroke-width="1.500" d="M2 14h3M11 14h3M4 9l2 3M12 9l-2 3M8 8v3"/></svg><i class="caret dark"></i>
            <b>DIM</b><label for="cmdin">选择对象或指定第一个尺寸界线原点或 [</label><button>角度(<em>A</em>)</button><button>基线(<em>B</em>)</button><button>连续(<em>C</em>)</button><button>坐标(<em>O</em>)</button><button>对齐(<em>G</em>)</button><button>分发(<em>D</em>)</button><button>图层(<em>L</em>)</button><button>放弃(<em>U</em>)</button><span>]:</span><input id="cmdin" type="text"><i class="caret dark up"></i>
          </div>
        </div>
      </div>
    </div>
  </main>

  <footer class="status">
    <div class="layouts">
      <button class="lt on">模型</button><button class="lt">布局1</button><button class="lt">布局2</button><button class="lt add"><svg class="p"><use href="#plus"/></svg></button>
    </div>
    <div class="sbar">
      <div class="g coords">2083.1974, 820.1132, 0.0000</div>
      <div class="g"><button class="mod">模型</button></div>
      <div class="g g-grid"><button class="st"><svg class="i"><use href="#sGrid"/></svg></button><button class="st"><svg class="i"><use href="#sSnap"/></svg></button></div>
      <div class="ime">CH <svg viewBox="0 0 12 14"><path fill="none" stroke="#444" stroke-width="1.300" d="M5 1c6 2 7 9-1 11-2 0-3-1-3-2 4 1 7-3 4-9z"/></svg> 简</div>
      <div class="g"><button class="st on"><svg class="i"><use href="#sDyn"/></svg></button></div>
      <div class="g"><button class="st"><svg class="i"><use href="#sOrtho"/></svg></button><button class="st c"><svg class="i"><use href="#sPolar"/></svg><i class="caret"></i></button><button class="st c"><svg class="i"><use href="#sIso"/></svg><i class="caret"></i></button></div>
      <div class="g"><button class="st on"><svg class="i"><use href="#sTrack"/></svg></button></div>
      <div class="g"><button class="st on"><svg class="i"><use href="#sOsnap"/></svg></button><i class="caret"></i></div>
      <div class="g"><button class="st"><svg class="i"><use href="#sLw"/></svg></button></div>
      <div class="g"><button class="st on"><svg class="i"><use href="#sTrans"/></svg></button></div>
      <div class="g"><button class="st"><svg class="i"><use href="#sCyc"/></svg></button></div>
      <div class="g"><button class="st c"><svg class="i"><use href="#s3d"/></svg><i class="caret"></i></button></div>
      <div class="g"><button class="st on"><svg class="i"><use href="#sUcs"/></svg></button><button class="st c"><svg class="i"><use href="#sFilt"/></svg><i class="caret"></i></button><button class="st on"><svg class="i"><use href="#sGiz"/></svg></button><i class="caret"></i></div>
      <div class="g"><button class="st on"><svg class="i"><use href="#sAnn1"/></svg></button><button class="st"><svg class="i"><use href="#sAnn2"/></svg></button><button class="st"><svg class="i"><use href="#sAnn"/></svg></button><button class="st scale">1:1 / 100%<i class="caret"></i></button></div>
      <div class="g"><button class="st c"><svg class="i"><use href="#gear"/></svg><i class="caret"></i></button></div>
      <div class="g"><button class="st"><svg class="i"><use href="#plus"/></svg></button></div>
      <div class="g"><button class="st units"><svg class="i"><use href="#sRul"/></svg>小数<i class="caret"></i></button></div>
      <div class="g"><button class="st"><svg class="i"><use href="#sList"/></svg></button></div>
      <div class="g"><button class="st c"><svg class="i"><use href="#sLock"/></svg><i class="caret"></i></button></div>
      <div class="g last"><button class="st"><svg class="i"><use href="#sIsoO"/></svg></button><button class="st on"><svg class="i"><use href="#sHw"/></svg></button><button class="st"><svg class="i"><use href="#sFull"/></svg></button><button class="st"><svg class="i"><use href="#sMenu"/></svg></button></div>
    </div>
  </footer>
</div>

<div class="tip" role="tooltip">
  <b>标注</b>
  <p>在单个命令会话中创建多种类型的标注。</p>
  <div class="tipcmd"><svg class="i" viewBox="0 0 16 16"><path fill="#f2efa0" stroke="#999" stroke-width=".5" d="M0 1h14v12H0z"/><path fill="#0a1fc8" d="M0 0h14v1.500H0zM2 9h2v6H2z"/><path fill="#111" d="M3 10h13v5H3z"/><path stroke="#bbb" stroke-dasharray="2 1" d="M4 12.500h11"/></svg><b>DIM</b></div>
  <b>按 F1 键获得更多帮助</b>
</div>
<svg class="arrows" aria-hidden="true">
  <g stroke="#f00" stroke-width="3">
    <path marker-end="url(#head)" d="M71 292 22 73"/>
    <path marker-end="url(#head)" d="M367 251 497 134"/>
    <path marker-end="url(#head)" d="M1471 215 1343 140"/>
    <path marker-end="url(#head)" d="M1181 357 1276 382"/>
    <path marker-end="url(#head)" d="M1109 515 1154 467"/>
    <path marker-end="url(#head)" d="M1653 536 1577 470"/>
  </g>
  <path fill="#fff" stroke="#111" d="M507.500 139.500v16l4-4 3 7 3-1-3-7h6z"/>
</svg>
<div class="mark">
  <svg viewBox="0 0 46 42"><path fill="#12629c" d="M45 1C20 3 2 14 1 30c4 5 10 4 14 3-6-8 2-23 30-32z"/><path fill="#1c8a4e" d="M15 22c8-8 22-8 25-3 3 6-8 15-20 14 9-2 14-7 12-10-2-4-10-3-17-1z"/><path fill="#b9b51f" d="M4 41c10-4 22-7 31-13-3 8-16 13-31 13z"/></svg>
  <div><span class="m1">极光下载站</span><span class="m2">www.xz7.com</span></div>
</div>
</div>
</body>
</html>
```
FILE: styles.css
```css
* { box-sizing: border-box; }
html, body { margin: 0; height: 100%; }
body {
  font: 12px/16px "Noto Sans", "Noto Sans CJK SC", sans-serif;
  color: #dfe2e6;
  background: #22384a;
  overflow: hidden;
}
button {
  font: inherit; color: inherit; background: none; border: 0; padding: 0; margin: 0;
  display: flex; align-items: center; white-space: nowrap;
}
h1, h2, p { margin: 0; font-size: 12px; font-weight: 400; }
.defs { position: absolute; width: 0; height: 0; }
.i { width: 16px; height: 16px; flex: none; display: block; }
.l { width: 32px; height: 32px; flex: none; display: block; }
.p { width: 9px; height: 9px; }
.p path { stroke-width: 3px; }
.w { fill: none; stroke: #d9d9d9; }
.b { fill: none; stroke: #7cc4f8; }
.wf { fill: #d9d9d9; }
.bf { fill: #7cc4f8; }
.caret { width: 0; height: 0; flex: none; border: 4px solid transparent; border-top-color: #d9d9d9; border-bottom: 0; }
.caret.s { border-width: 3px 3px 0; }
.caret.up { border: 4px solid transparent; border-bottom-color: #555; border-top: 0; }
.caret.right { border: 4px solid transparent; border-left-color: #d9d9d9; border-right: 0; }
.caret.dark { border-top-color: #555; }
.caret.dark.up { border-top-color: transparent; }

.desktop {
  position: relative; min-height: 100vh; display: flex; padding: 0 4px 6px 0;
  background: linear-gradient(#f0f0f0, #f0f0f0) right top / 4px calc(100% - 6px) no-repeat, linear-gradient(90deg, #1f3a42, #1f3348) #22384a;
}
.window {
  flex: 1; min-width: 0; display: flex; flex-direction: column;
  border: 1px solid #0a94dc; background: #222933;
}

/* title */
.titlebar { display: flex; align-items: center; height: 27px; padding: 0 8px 0 7px; }
.quick { display: flex; align-items: center; width: 38%; flex: none; }
.qa { display: flex; align-items: center; gap: 8px; margin: 0 8px 0 17px; }
.ib { gap: 5px; }
.customise { border-top: 2px solid #d9d9d9; padding-top: 2px; margin: 0 0 0 3px; }
.share { color: #7cc4f8; gap: 4px; }
.title { display: flex; gap: 16px; color: #d5d8dc; font-size: 13px; }
.account { flex: 1; display: flex; align-items: center; justify-content: flex-end; gap: 8px; padding-right: 64px; }
.search {
  width: 178px; height: 20px; border: 0; padding: 0 3px; background: #495164;
  font: italic 12px "Noto Sans", "Noto Sans CJK SC", sans-serif; color: #c4c8d0;
}
.search::placeholder { color: #b4b9c4; opacity: 1; }
.login { color: #fff; }
.login .caret { margin: 0 6px 0 55px; }
.help { border-left: 1px solid #4b5464; padding-left: 9px; height: 20px; }
.help b { width: 16px; height: 16px; border-radius: 8px; background: #d9d9d9; color: #222933; line-height: 16px; text-align: center; }
.winctl, .docctl { display: flex; gap: 8px; }
.docctl { margin-left: auto; gap: 1px; }

.menubar { display: flex; align-items: center; gap: 25px; height: 21px; padding: 0 4px 0 17px; border-bottom: 1px solid #3b4453; color: #c3c6ca; }
.tabs { display: flex; align-items: flex-end; gap: 2px; height: 24px; padding-left: 7px; color: #b4b8be; }
.tabs button { height: 20px; padding: 2px 9px 0; }
.tabs .on { background: #3b4453; color: #fff; }
.tabs .mini { gap: 5px; padding-left: 25px; }
.mini span { background: #e6e6e6; height: 8px; width: 15px; display: flex; justify-content: center; align-items: center; }

/* ribbon */
.ribbon { display: flex; height: 99px; margin-left: 4px; background: #3b4453; }
.panel { display: flex; flex-direction: column; border-right: 1px solid #222933; flex: none; }
.panel:last-child { border-right: 0; }
.tools { display: flex; flex: 1; padding-top: 6px; }
.panel h2 { display: flex; align-items: center; justify-content: center; gap: 7px; height: 20px; padding-top: 1px; }
.big { flex-direction: column; align-items: center; height: 72px; padding-top: 2px; line-height: 17px; white-space: normal; }
.big .l, .big .glyphA { margin-bottom: 3px; }
.big .caret { margin-top: 4px; }
.col { display: flex; flex-direction: column; gap: 2px; }
.sm { height: 22px; gap: 5px; }
.sm .caret { margin-left: 4px; }
.wide .caret { margin-left: 8px; }
.glyphA { width: 32px; height: 32px; border-bottom: 1px solid #7cc4f8; font: 40px/30px "Liberation Sans", sans-serif; text-align: center; }
.p-draw { width: 211px; }
.p-draw .tools { padding-left: 2px; }
.p-draw .big { width: 40px; }
.p-draw .col { padding-left: 10px; }
.p-mod { width: 227px; }
.p-mod .tools { padding-left: 7px; gap: 14px; }
.p-ann { width: 156px; }
.p-ann .tools { padding-left: 6px; gap: 5px; }
.p-ann .big { width: 37px; }
.p-ann .hot { background: #272e3a; }
.p-ann .wide .caret { margin-left: 3px; }
.p-lay { width: 252px; }
.p-lay .tools { padding-left: 3px; gap: 3px; }
.p-lay .big { width: 36px; }
.p-lay .col { width: 209px; }
.icons { display: flex; gap: 8px; padding-left: 3px; }
.combo { height: 22px; border: 1px solid #2a313d; background: #4d586c; padding: 0 3px 0 4px; gap: 3px; width: 100%; }
.combo .caret { margin-left: auto; }
.sw { width: 14px; height: 14px; background: #fff; border: 1px solid #111; margin: 0 4px 0 2px; }
.color .sw { border-color: #999; margin: 0 8px 0 8px; width: 16px; height: 16px; }
.rule { width: 64px; height: 1px; background: #fff; }
.p-blk { width: 134px; }
.p-blk .tools { padding-left: 4px; gap: 7px; }
.p-blk .big { width: 34px; }
.p-prop { width: 244px; }
.p-prop .tools { padding: 6px 1px 0 5px; gap: 3px; }
.p-prop .big { width: 34px; }
.grow { flex: 1; }
.p-prop h2 { position: relative; }
.launch { position: absolute; right: 5px; width: 8px; height: 8px; }
.p-grp { width: 68px; }
.p-grp .tools { padding-left: 5px; gap: 4px; }
.p-grp .sm { width: 24px; padding-left: 3px; }
.p-grp .sel { border: 1px solid #7cc4f8; background: #4d586c; }
.p-util { width: 76px; }
.p-util .tools { padding-left: 9px; gap: 12px; }
.p-clip { width: 78px; }
.p-clip .tools { padding-left: 10px; gap: 12px; }

.filetabs { display: flex; align-items: flex-end; gap: 2px; height: 30px; padding-left: 21px; border-bottom: 4px solid #3b4453; }
.ft { height: 21px; border-radius: 8px 8px 0 0; background: #2e3542; color: #a9aeb6; }
.ft.start { width: 126px; padding-left: 14px; }
.ft.cur { width: 122px; padding: 0 10px; background: #3b4453; color: #fff; font-weight: 700; justify-content: space-between; }
.ft.cur .i { width: 12px; height: 12px; opacity: .7; }
.ft.add { width: 21px; height: 15px; margin: 0 0 2px 6px; border-radius: 3px 8px 8px 8px; justify-content: center; }

/* workspace */
.work { flex: 1; display: flex; min-height: 0; padding-right: 3px; border-bottom: 1px solid #4a505a; }
.side { width: 29px; margin-left: 3px; background: #3b4453; }
.toolbox { display: flex; flex-direction: column; width: 25px; border: 1px solid #272e3a; padding-bottom: 1px; }
.toolbox button { height: 22px; padding-left: 3px; }
.toolbox .txt { font: 700 17px/22px "Liberation Sans", sans-serif; padding-left: 5px; }
.grip { width: 14px; height: 3px; margin: 2px 0 2px 3px; background: repeating-linear-gradient(90deg, #aeb3ba 0 1px, transparent 1px 2px); }
.canvas { position: relative; flex: 1; min-width: 0; background: #000; overflow: hidden; }
.viewlabel { position: absolute; left: 4px; top: 6px; color: #e2e2e2; }
.drawing { position: absolute; left: 0; top: 0; width: 100%; height: 100%; }
.cad { fill: #fff; font-family: "DejaVu Sans Light", "DejaVu Sans", "Noto Sans CJK SC", sans-serif; font-weight: 200; font-size: 18px; }
.cad.big { font-family: "Noto Sans CJK SC", sans-serif; font-weight: 100; font-size: 80px; }
.cad.num { font-size: 45px; }
.ucs { position: absolute; left: 16px; bottom: 11px; width: 80px; height: 80px; }
.cube { position: absolute; top: 6px; right: 15px; width: 136px; display: flex; flex-direction: column; align-items: center; gap: 10px; }
.cube > svg { width: 136px; height: 152px; }
.cube text { font-family: "Noto Sans CJK SC", sans-serif; font-size: 18px; fill: #a5a5a5; text-anchor: middle; }
.cube .top { font-size: 30px; fill: #46484e; }
.wcs { height: 18px; width: 48px; border-radius: 4px; background: #85868f; color: #333; font-size: 11px; padding: 0 4px; justify-content: space-between; }
.wcs svg { width: 10px; height: 6px; }
.navbar { position: absolute; top: 212px; right: 4px; width: 32px; height: 212px; background: #454545; border: 1px solid #555; border-radius: 4px; }
.navbar svg { display: block; width: 30px; height: 210px; }

.cmd { position: absolute; left: 383px; right: 383px; bottom: 1px; font: 13px/16px "Noto Sans Mono CJK SC", "DejaVu Sans Mono", "Noto Sans CJK SC", monospace; }
.cmd p { font-size: 13px; width: max-content; margin: 0 0 4px 62px; padding: 0 3px 0 2px; border-radius: 2px; background: #5a5a5a; white-space: pre; }
.cmd .h1 { background: #424242; color: #9a9a9a; }
.cmd .h2 { background: #4c4c4c; color: #bdbdbd; }
.cmd .h3 { color: #e8e8e8; margin-bottom: 3px; }
.cmdbar { display: flex; height: 26px; }
.cmdhandle { width: 56px; background: #2f3541; display: flex; align-items: center; gap: 6px; padding-left: 4px; }
.grip.v { width: 5px; height: 20px; margin: 0; background: repeating-linear-gradient(#c9ccd1 0 2px, transparent 2px 3px); }
.cmdhandle .ib:first-of-type .i { width: 12px; }
.cmdhandle .ib:last-of-type { margin-left: auto; padding-right: 6px; }
.cmdline { flex: 1; display: flex; align-items: center; background: #fff; color: #111; padding: 0 4px; white-space: pre; min-width: 0; }
.dimi { margin-right: 2px; }
.cmdline b { font-weight: 700; margin: 0 5px 0 6px; }
.cmdline button { background: #cfcfcf; border-radius: 3px; padding: 0 2px 0 1px; margin-right: 4px; height: 20px; }
.cmdline button:first-of-type { margin-left: 2px; }
.cmdline button:last-of-type { margin-right: 0; }
.cmdline em { font-style: normal; color: #1313e6; }
.cmdline input { flex: 1; min-width: 0; border: 0; background: none; outline: 0; }

/* status */
.status { display: flex; justify-content: space-between; height: 32px; }
.layouts { display: flex; gap: 5px; padding-left: 14px; }
.lt { height: 17px; width: 47px; justify-content: center; background: #2c333f; color: #b9bdc4; border-radius: 0 0 8px 8px; }
.lt.on { background: #3b4453; color: #fff; font-weight: 700; }
.lt.add { width: 22px; margin-left: 3px; border-radius: 0 0 8px 3px; }
.sbar { display: flex; gap: 2px; padding: 1px 4px 0 0; height: 25px; }
.g { display: flex; align-items: center; background: #3b4453; height: 24px; }
.g > .caret { margin: 0 5px; }
.coords { width: 180px; justify-content: flex-end; padding-right: 4px; background: #3a4150; color: #c6c9ce; margin-right: 1px; }
.mod { padding: 0 3px; color: #fff; margin-right: 1px; }
.g-grid { width: 90px; margin-right: -2px; }
.st { height: 22px; width: 23px; justify-content: center; color: #fff; }
.st.on { background: #5f8dc4; }
.st.c { width: 40px; gap: 9px; justify-content: flex-start; padding-left: 4px; }
.scale { width: 78px; gap: 6px; font-family: Roboto, sans-serif; }
.units { width: 97px; justify-content: flex-start; padding: 0 5px 0 3px; gap: 10px; }
.units .caret { margin-left: auto; }
.last { padding-left: 3px; gap: 3px; }
.last .on { opacity: .8; }
.ime {
  position: absolute; left: 951px; bottom: 10px; width: 60px; height: 26px; border-radius: 4px; background: #fff; color: #333;
  display: flex; align-items: center; justify-content: center; gap: 3px; font-size: 13px; box-shadow: 0 0 3px #000; z-index: 2;
}
.ime svg { width: 12px; height: 14px; }

/* overlays */
.tip {
  position: absolute; left: 512px; top: 165px; width: 236px; height: 112px; padding: 9px 6px 0 8px;
  background: #eee; color: #484848; border-radius: 2px; line-height: 16px;
}
.tip > b { display: block; color: #3c3c3c; font-weight: 500; }
.tip > b:last-child { font-weight: 700; margin-top: 8px; }
.tip p { margin-top: 7px; padding-bottom: 8px; border-bottom: 1px solid #bbb; white-space: nowrap; }
.tipcmd { display: flex; align-items: center; gap: 5px; margin-top: 6px; font-size: 13px; }
.arrows { position: absolute; left: 0; top: 0; width: 100%; height: 100%; pointer-events: none; filter: drop-shadow(2px 3px 2px rgba(0, 0, 0, .6)); }
.mark { position: absolute; right: 8px; bottom: 8px; display: flex; pointer-events: none; opacity: .9; }
.mark > svg { width: 46px; height: 42px; }
.mark div { display: flex; flex-direction: column; }
.m1 { font-size: 21px; line-height: 24px; font-weight: 700; color: #17508f; }
.m2 { font: 700 16px/18px "Liberation Sans", sans-serif; color: #17743f; }
```
